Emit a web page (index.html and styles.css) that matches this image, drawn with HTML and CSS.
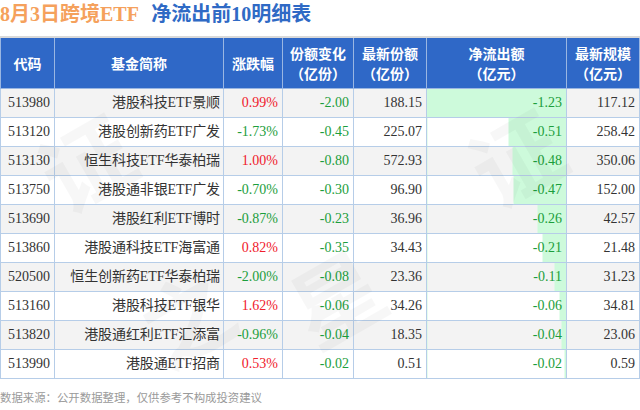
FILE: index.html
```html
<!DOCTYPE html>
<html lang="zh-CN">
<head>
<meta charset="utf-8">
<link rel="stylesheet" href="styles.css">
</head>
<body>
<div class="page">
  <div class="title">
    <span class="t-orange">8月3日跨境ETF</span>
    <span class="t-blue">净流出前10明细表</span>
  </div>
  <table class="grid">
    <colgroup>
      <col class="c1"><col class="c2"><col class="c3"><col class="c4"><col class="c5"><col class="c6"><col class="c7">
    </colgroup>
    <thead>
      <tr>
        <th>代码</th>
        <th>基金简称</th>
        <th>涨跌幅</th>
        <th>份额变化<br>（亿份）</th>
        <th>最新份额<br>（亿份）</th>
        <th>净流出额<br>（亿元）</th>
        <th>最新规模<br>（亿元）</th>
      </tr>
    </thead>
    <tbody>
      <tr><td>513980</td><td class="name">港股科技ETF景顺</td><td class="up">0.99%</td><td class="dn">-2.00</td><td>188.15</td><td class="dn bar" style="background:linear-gradient(to left,#cdfadb 100%,transparent 100%)">-1.23</td><td>117.12</td></tr>
      <tr><td>513120</td><td class="name">港股创新药ETF广发</td><td class="dn">-1.73%</td><td class="dn">-0.45</td><td>225.07</td><td class="dn bar" style="background:linear-gradient(to left,#cdfadb 41.5%,transparent 41.5%)">-0.51</td><td>258.42</td></tr>
      <tr><td>513130</td><td class="name">恒生科技ETF华泰柏瑞</td><td class="up">1.00%</td><td class="dn">-0.80</td><td>572.93</td><td class="dn bar" style="background:linear-gradient(to left,#cdfadb 39%,transparent 39%)">-0.48</td><td>350.06</td></tr>
      <tr><td>513750</td><td class="name">港股通非银ETF广发</td><td class="dn">-0.70%</td><td class="dn">-0.30</td><td>96.90</td><td class="dn bar" style="background:linear-gradient(to left,#cdfadb 38.2%,transparent 38.2%)">-0.47</td><td>152.00</td></tr>
      <tr><td>513690</td><td class="name">港股红利ETF博时</td><td class="dn">-0.87%</td><td class="dn">-0.23</td><td>36.96</td><td class="dn bar" style="background:linear-gradient(to left,#cdfadb 21.1%,transparent 21.1%)">-0.26</td><td>42.57</td></tr>
      <tr><td>513860</td><td class="name">港股通科技ETF海富通</td><td class="up">0.82%</td><td class="dn">-0.35</td><td>34.43</td><td class="dn bar" style="background:linear-gradient(to left,#cdfadb 17.1%,transparent 17.1%)">-0.21</td><td>21.48</td></tr>
      <tr><td>520500</td><td class="name">恒生创新药ETF华泰柏瑞</td><td class="dn">-2.00%</td><td class="dn">-0.08</td><td>23.36</td><td class="dn bar" style="background:linear-gradient(to left,#cdfadb 8.9%,transparent 8.9%)">-0.11</td><td>31.23</td></tr>
      <tr><td>513160</td><td class="name">港股科技ETF银华</td><td class="up">1.62%</td><td class="dn">-0.06</td><td>34.26</td><td class="dn bar" style="background:linear-gradient(to left,#cdfadb 4.9%,transparent 4.9%)">-0.06</td><td>34.81</td></tr>
      <tr><td>513820</td><td class="name">港股通红利ETF汇添富</td><td class="dn">-0.96%</td><td class="dn">-0.04</td><td>18.35</td><td class="dn bar" style="background:linear-gradient(to left,#cdfadb 3.3%,transparent 3.3%)">-0.04</td><td>23.06</td></tr>
      <tr><td>513990</td><td class="name">港股通ETF招商</td><td class="up">0.53%</td><td class="dn">-0.02</td><td>0.51</td><td class="dn bar" style="background:linear-gradient(to left,#cdfadb 1.6%,transparent 1.6%)">-0.02</td><td>0.59</td></tr>
    </tbody>
  </table>
  <div class="foot">数据来源：公开数据整理，仅供参考不构成投资建议</div>
  <div class="wm wm1">证</div>
  <div class="wm wm2">星</div>
  <div class="wm wm3">证</div>
  <div class="wm wm4">之</div>
</div>
</body>
</html>
```

FILE: styles.css
```css
html, body {
  margin: 0;
  padding: 0;
  background: #fff;
}
.page {
  position: relative;
  width: 640px;
  height: 410px;
  overflow: hidden;
  font-family: "Liberation Serif", "Noto Sans CJK SC", serif;
}
.title {
  height: 28px;
  line-height: 28px;
  font-size: 20px;
  font-weight: bold;
  margin-bottom: 8px;
  white-space: nowrap;
}
.t-orange {
  color: #f5a15c;
}
.t-blue {
  color: #2f6ac5;
  margin-left: 8px;
}
.grid {
  width: 640px;
  table-layout: fixed;
  border-collapse: collapse;
  border: 1px solid #d9d9d9;
  font-size: 14px;
  color: #333;
}
.c1 { width: 54px; }
.c2 { width: 169px; }
.c3 { width: 59px; }
.c4 { width: 71px; }
.c5 { width: 73px; }
.c6 { width: 140px; }
.c7 { width: 73px; }
.grid th {
  background: #2f68c7;
  color: #fff;
  font-family: "Noto Sans CJK SC", sans-serif;
  font-weight: bold;
  font-size: 14px;
  line-height: 20px;
  height: 50px;
  padding: 0;
  text-align: center;
  border: 1px solid #9ab6e2;
  border-top: 2px solid #d9d9d9;
}
.grid td {
  height: 28px;
  padding: 0 4px 0 0;
  text-align: right;
  border: 1px solid #b6cde8;
  white-space: nowrap;
  line-height: 28px;
}
.grid td.name {
  padding-right: 3px;
  letter-spacing: -0.1px;
}
.grid tbody tr:nth-child(odd) {
  background: #f3f3f3;
}
.grid tbody tr:nth-child(even) {
  background: #fff;
}
.up { color: #f0202c; }
.dn { color: #1c9e3c; }
.bar {
  background-repeat: no-repeat;
}
.foot {
  margin-top: 8px;
  font-family: "Noto Sans CJK SC", sans-serif;
  font-size: 11.4px;
  line-height: 20px;
  color: #9a9a9a;
  white-space: nowrap;
}
.wm {
  position: absolute;
  width: 120px;
  height: 120px;
  font-family: "Noto Sans CJK SC", sans-serif;
  font-size: 90px;
  line-height: 120px;
  text-align: center;
  font-weight: bold;
  color: rgba(0, 0, 0, 0.03);
  pointer-events: none;
  transform: rotate(-30deg);
}
.wm1 { left: 25px; top: 100px; }
.wm2 { left: 275px; top: 235px; }
.wm3 { left: 455px; top: 95px; }
.wm4 { left: 125px; top: 255px; }
```
